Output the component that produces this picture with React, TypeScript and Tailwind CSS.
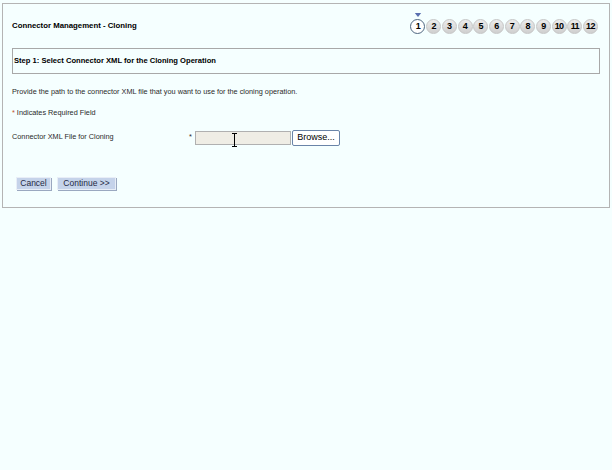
import type { ReactNode } from 'react';

const STEPS = [1, 2, 3, 4, 5, 6, 7, 8, 9, 10, 11, 12];

function StepDot({ n, active }: { n: number; active?: boolean }) {
  return (
    <div className="relative">
      {active && (
        <svg viewBox="0 0 8 5" className="absolute left-1/2 -top-[6px] h-[4px] w-[7px] -translate-x-1/2">
          <path d="M0 0h8L4 5z" fill="#5a6fb0" />
        </svg>
      )}
      <div
        className={
          active
            ? 'grid h-[15px] w-[15px] place-items-center rounded-full border-[1.5px] border-[#4f6680] bg-white text-[9px] font-bold leading-none tracking-[-0.6px] text-black'
            : 'grid h-[15px] w-[15px] place-items-center rounded-full border border-[#c6c6c6] bg-gradient-to-b from-[#ececec] to-[#cfcfcf] text-[9px] font-bold leading-none tracking-[-0.6px] text-black'
        }
      >
        {n}
      </div>
    </div>
  );
}

function BlueButton({ children, w }: { children: ReactNode; w: string }) {
  return (
    <button
      className={`h-[13px] border border-[#e8eef7] bg-[#c5d3ea] text-[8.5px] leading-none text-[#1f2a44] shadow-[1px_1px_0_#9aa8c0] ${w}`}
    >
      {children}
    </button>
  );
}

export default function App() {
  return (
    <div
      className="min-h-[470px] w-full bg-[#f5ffff] px-[2px] pt-[3px] text-black"
      style={{ fontFamily: '"Liberation Sans", Arial, sans-serif' }}
    >
      <div className="h-[205px] border border-[#b4b4b4] bg-[#f5ffff] px-[9px]">
        <div className="flex h-[44px] items-start justify-between">
          <h1 className="pt-[16px] text-[7.8px] font-bold">Connector Management - Cloning</h1>
          <div className="mr-[2px] mt-[15px] flex gap-[0.7px]">
            {STEPS.map((n) => (
              <StepDot key={n} n={n} active={n === 1} />
            ))}
          </div>
        </div>
        <div className="flex h-[26px] items-center border border-[#a8a8a8] px-[1px]">
          <h2 className="text-[7.6px] font-bold">Step 1: Select Connector XML for the Cloning Operation</h2>
        </div>
        <p className="mt-[13px] text-[7.3px] text-[#2a2a2a]">
          Provide the path to the connector XML file that you want to use for the cloning operation.
        </p>
        <p className="mt-[10px] text-[7.3px] text-[#2a2a2a]">
          <span className="text-[#c0502a]">*</span> Indicates Required Field
        </p>
        <div className="mt-[11px] flex items-center">
          <label className="w-[177px] text-[7.3px] text-[#2a2a2a]">Connector XML File for Cloning</label>
          <span className="w-[6px] text-[7.3px] text-[#2a2a2a]">*</span>
          <div className="relative h-[14px] w-[96px] border border-[#b0b0b0] bg-[#efede5]">
            <span className="absolute left-[38px] top-[1px] h-[14px] w-[1px] bg-black" />
            <span className="absolute left-[36px] top-[1px] h-[1px] w-[5px] bg-black" />
            <span className="absolute left-[36px] top-[14px] h-[1px] w-[5px] bg-black" />
          </div>
          <button className="ml-[1px] h-[16px] w-[48px] rounded-[2px] border border-[#6a84a8] bg-white text-[9px] leading-none text-black">
            Browse...
          </button>
        </div>
        <div className="ml-[4px] mt-[31px] flex gap-[6px]">
          <BlueButton w="w-[35px]">Cancel</BlueButton>
          <BlueButton w="w-[59px]">Continue &gt;&gt;</BlueButton>
        </div>
      </div>
    </div>
  );
}
